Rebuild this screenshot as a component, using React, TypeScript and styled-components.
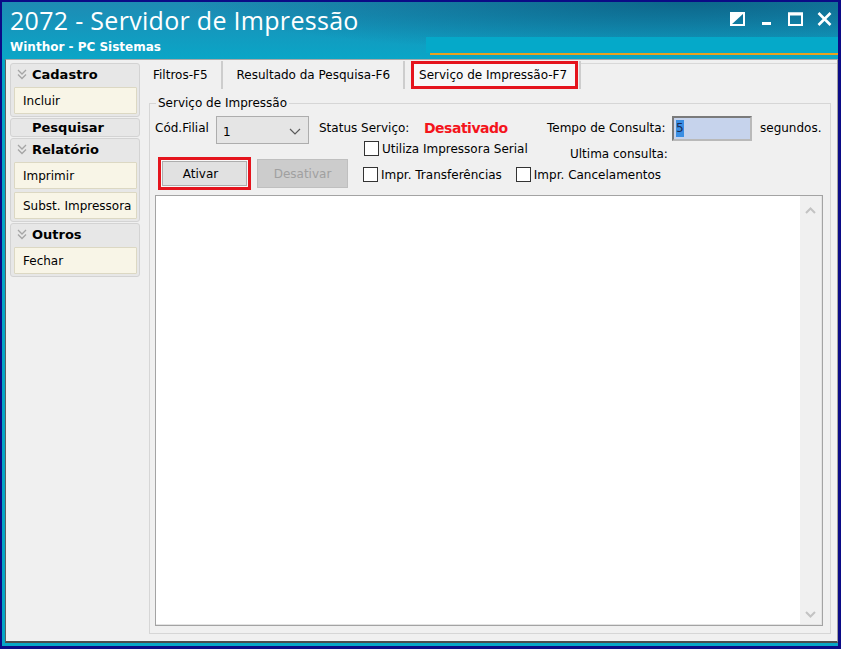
import React from 'react'
import styled, { createGlobalStyle } from 'styled-components'

const GlobalStyle = createGlobalStyle`
  html, body {
    margin: 0;
    padding: 0;
    background: #ffffff;
  }
  body {
    font-family: 'DejaVu Sans', 'Noto Sans', sans-serif;
    font-size: 12px;
    color: #000;
  }
  * {
    box-sizing: border-box;
  }
`

const Window = styled.div`
  width: 841px;
  height: 649px;
  background: #0b0b86;
  padding: 2px 3px 3px 2px;
  display: flex;
`

const Frame = styled.div`
  flex: 1;
  min-width: 0;
  display: flex;
  flex-direction: column;
  background: #07a6c6;
`

const TitleBar = styled.div`
  height: 57px;
  flex-shrink: 0;
  display: flex;
  justify-content: space-between;
  padding: 0 6px 0 8px;
  background:
    linear-gradient(#e9a11f, #e9a11f) right 0 top 51px / 408px 2px no-repeat,
    linear-gradient(#05a9c9, #05a9c9) right 0 top 35px / 412px 16px no-repeat,
    radial-gradient(ellipse 60% 90% at 82% 0%, rgba(6, 90, 125, 0.75), rgba(6, 90, 125, 0) 100%),
    linear-gradient(180deg, #1e8bb3 0%, #1597bd 45%, #0aa6c7 100%);
`

const TitleText = styled.div`
  display: flex;
  flex-direction: column;
  padding-top: 4px;
  color: #ffffff;
`

const AppTitle = styled.div`
  font-family: 'Open Sans', 'Noto Sans', sans-serif;
  font-size: 25px;
  letter-spacing: 0.3px;
  line-height: 28px;
  white-space: nowrap;
`

const AppSubtitle = styled.div`
  margin-top: 6px;
  font-weight: bold;
  font-size: 12px;
  line-height: 14px;
  white-space: nowrap;
`

const WindowButtons = styled.div`
  display: flex;
  gap: 14px;
  padding-top: 10px;
`

const BodyWrap = styled.div`
  flex: 1;
  min-height: 0;
  display: flex;
  padding: 0 0 3px 3px;
`

const Body = styled.div`
  flex: 1;
  min-width: 0;
  display: flex;
  background: #f0f0f0;
  border-top: 1px solid #a9a9a9;
  border-left: 1px solid #5f5f5f;
  border-right: 1px solid #a0a0a0;
  border-bottom: 2px solid #4d4d4d;
`

const Sidebar = styled.div`
  width: 137px;
  flex-shrink: 0;
  display: flex;
  flex-direction: column;
  gap: 1px;
  padding: 3px 3px 0 4px;
`

const Group = styled.div<{ $empty?: boolean }>`
  display: flex;
  flex-direction: column;
  gap: 3px;
  padding: 0 2px ${p => (p.$empty ? 0 : 2)}px 3px;
  background: #e7e7e7;
  border: 1px solid #d3d3d3;
  border-radius: 3px;
`

const GroupHeader = styled.div<{ $indent: number; $h: number }>`
  height: ${p => p.$h}px;
  display: flex;
  align-items: center;
  gap: 5px;
  padding-left: ${p => p.$indent}px;
  font-weight: bold;
  font-size: 13px;
  color: #000;
  white-space: nowrap;
`

const GroupItem = styled.div`
  height: 27px;
  display: flex;
  align-items: center;
  padding-left: 8px;
  background: #f8f5e7;
  border: 1px solid #dcd8c3;
  border-radius: 1px;
  white-space: nowrap;
`

const Main = styled.div`
  flex: 1;
  min-width: 0;
  display: flex;
  flex-direction: column;
  padding-top: 1px;
`

const TabStrip = styled.div`
  height: 28px;
  display: flex;
  align-items: stretch;
`

const Tab = styled.div<{ $pl: number; $pr: number }>`
  display: flex;
  align-items: center;
  padding: 0 ${p => p.$pr}px 0 ${p => p.$pl}px;
  border-right: 2px solid #cdcdcd;
  white-space: nowrap;
`

const Marked = styled.div<{ $pad: string }>`
  display: flex;
  align-items: center;
  align-self: stretch;
  padding: ${p => p.$pad};
  border: 3px solid #e5141d;
  background: #f8f8f8;
`

const TabRest = styled.div`
  flex: 1;
  margin-top: 2px;
  border-top: 1px solid #d8d8d8;
`

const TabPage = styled.div`
  flex: 1;
  min-height: 0;
  display: flex;
  padding: 7px 6px 7px 6px;
`

const GroupBox = styled.fieldset`
  flex: 1;
  min-width: 0;
  margin: 0;
  display: flex;
  flex-direction: column;
  padding: 0 7px 7px 5px;
  border: 1px solid #d6d6d6;
`

const Legend = styled.legend`
  margin-left: 1px;
  padding: 0 2px;
  font-size: 12px;
  line-height: 15px;
  white-space: nowrap;
`

const Row = styled.div<{ $h: number; $mt?: number }>`
  height: ${p => p.$h}px;
  margin-top: ${p => p.$mt ?? 0}px;
  display: flex;
  align-items: center;
  white-space: nowrap;
`

const Cell = styled.div<{ $w?: number; $ml?: number; $dy?: number }>`
  ${p => (p.$w ? `width: ${p.$w}px; flex-shrink: 0;` : '')}
  margin-left: ${p => p.$ml ?? 0}px;
  position: relative;
  top: ${p => p.$dy ?? 0}px;
  display: flex;
  align-items: center;
`

const Combo = styled.div`
  width: 93px;
  height: 28px;
  align-self: flex-start;
  display: flex;
  align-items: center;
  justify-content: space-between;
  padding: 3px 7px 0 6px;
  background: #e5e5e5;
  border: 1px solid #adadad;
`

const StatusText = styled.span`
  font-weight: bold;
  font-size: 14px;
  letter-spacing: -0.5px;
  color: #f4141c;
`

const NumberInput = styled.div`
  width: 80px;
  height: 25px;
  display: flex;
  align-items: center;
  padding-left: 2px;
  background: #c6d3ec;
  border: 2px solid #8c8c8c;
  border-color: #7a7a7a #b9b9b9 #b9b9b9 #7a7a7a;
`

const Selected = styled.span`
  background: #3a8ee3;
  color: #1a2a55;
  padding: 1px 0;
  line-height: 15px;
`

const CheckBox = styled.span`
  width: 15px;
  height: 15px;
  flex-shrink: 0;
  background: #ffffff;
  border: 1px solid #333333;
  margin-right: 3px;
`

const Button = styled.div<{ $disabled?: boolean; $w: number; $h: number; $shift?: number }>`
  width: ${p => p.$w}px;
  height: ${p => p.$h}px;
  display: flex;
  align-items: center;
  justify-content: center;
  padding-right: ${p => p.$shift ?? 0}px;
  background: ${p => (p.$disabled ? '#cccccc' : '#e1e1e1')};
  border: 1px solid ${p => (p.$disabled ? '#bfbfbf' : '#adadad')};
  color: ${p => (p.$disabled ? '#a0a0a0' : '#000000')};
`

const Memo = styled.div`
  flex: 1;
  margin-top: 5px;
  display: flex;
  background: #ffffff;
  border: 1px solid #a3a3a3;
  box-shadow: inset -1px -1px 0 #e3e3e3;
`

const MemoText = styled.div`
  flex: 1;
`

const ScrollBar = styled.div`
  width: 21px;
  display: flex;
  flex-direction: column;
  justify-content: space-between;
  background: #f0f0f0;
  margin: 0 1px 1px 0;
`

const ScrollButton = styled.div<{ $h: number }>`
  height: ${p => p.$h}px;
  display: flex;
  align-items: center;
  justify-content: center;
`

const Chevron = ({ up }: { up?: boolean }) => (
  <svg width="11" height="7" viewBox="0 0 11 7">
    <polyline
      points={up ? '1,6 5.5,1.5 10,6' : '1,1 5.5,5.5 10,1'}
      fill="none"
      stroke="#c3c3c3"
      strokeWidth="2"
    />
  </svg>
)

const ComboArrow = () => (
  <svg width="12" height="7" viewBox="0 0 12 7">
    <polyline points="1,1 6,6 11,1" fill="none" stroke="#5a5a5a" strokeWidth="1.2" />
  </svg>
)

const DoubleChevron = () => (
  <svg width="10" height="11" viewBox="0 0 10 11">
    <polyline points="1,1 5,5 9,1" fill="none" stroke="#a5a5a5" strokeWidth="1.3" />
    <polyline points="1,5.5 5,9.5 9,5.5" fill="none" stroke="#a5a5a5" strokeWidth="1.3" />
  </svg>
)

const IconRestore = () => (
  <svg width="15" height="14" viewBox="0 0 15 14">
    <rect x="1" y="1" width="13" height="12" fill="none" stroke="#fff" strokeWidth="2" />
    <polygon points="1,1 14,1 1,13" fill="#fff" />
  </svg>
)

const IconMin = () => (
  <svg width="15" height="14" viewBox="0 0 15 14">
    <rect x="3" y="10" width="9" height="3" fill="#fff" />
  </svg>
)

const IconMax = () => (
  <svg width="15" height="14" viewBox="0 0 15 14">
    <rect x="1" y="1.5" width="13" height="11.5" fill="none" stroke="#fff" strokeWidth="2" />
    <rect x="0" y="0.5" width="15" height="3" fill="#fff" />
  </svg>
)

const IconClose = () => (
  <svg width="15" height="14" viewBox="0 0 15 14">
    <path d="M1.5 1 L13.5 13 M13.5 1 L1.5 13" stroke="#fff" strokeWidth="2.6" />
  </svg>
)

const sideGroups = [
  { title: 'Cadastro', icon: true, items: ['Incluir'] },
  { title: 'Pesquisar', icon: false, items: [] as string[] },
  { title: 'Relatório', icon: true, items: ['Imprimir', 'Subst. Impressora'] },
  { title: 'Outros', icon: true, items: ['Fechar'] },
]

export default function App() {
  return (
    <>
      <GlobalStyle />
      <Window>
        <Frame>
          <TitleBar>
            <TitleText>
              <AppTitle>2072 - Servidor de Impressão</AppTitle>
              <AppSubtitle>Winthor - PC Sistemas</AppSubtitle>
            </TitleText>
            <WindowButtons>
              <IconRestore />
              <IconMin />
              <IconMax />
              <IconClose />
            </WindowButtons>
          </TitleBar>

          <BodyWrap>
            <Body>
              <Sidebar>
                {sideGroups.map(g => (
                  <Group key={g.title} $empty={g.items.length === 0}>
                    <GroupHeader $indent={g.icon ? 3 : 18} $h={g.items.length ? 20 : 17}>
                      {g.icon && <DoubleChevron />}
                      {g.title}
                    </GroupHeader>
                    {g.items.map(item => (
                      <GroupItem key={item}>{item}</GroupItem>
                    ))}
                  </Group>
                ))}
              </Sidebar>

              <Main>
                <TabStrip>
                  <Tab $pl={10} $pr={13}>Filtros-F5</Tab>
                  <Tab $pl={14} $pr={13}>Resultado da Pesquisa-F6</Tab>
                  <Tab $pl={6} $pr={1}>
                    <Marked $pad="0 8px 0 5px">Serviço de Impressão-F7</Marked>
                  </Tab>
                  <TabRest />
                </TabStrip>

                <TabPage>
                  <GroupBox>
                    <Legend>Serviço de Impressão</Legend>

                    <Row $h={24} $mt={5}>
                      <Cell $w={61}>Cód.Filial</Cell>
                      <Combo>
                        <span>1</span>
                        <ComboArrow />
                      </Combo>
                      <Cell $w={105} $ml={10}>Status Serviço:</Cell>
                      <Cell $w={123}>
                        <StatusText>Desativado</StatusText>
                      </Cell>
                      <Cell $w={125}>Tempo de Consulta:</Cell>
                      <NumberInput>
                        <Selected>5</Selected>
                      </NumberInput>
                      <Cell $ml={8}>segundos.</Cell>
                    </Row>

                    <Row $h={17}>
                      <Cell $w={206} $ml={209}>
                        <CheckBox />
                        Utiliza Impressora Serial
                      </Cell>
                      <Cell $dy={5}>Ultima consulta:</Cell>
                    </Row>

                    <Row $h={33}>
                      <Cell $ml={3}>
                        <Marked $pad="1px">
                          <Button $w={85} $h={25} $shift={8}>Ativar</Button>
                        </Marked>
                      </Cell>
                      <Cell $ml={6}>
                        <Button $disabled $w={91} $h={29}>Desativar</Button>
                      </Cell>
                      <Cell $ml={15} $dy={1}>
                        <CheckBox />
                        Impr. Transferências
                      </Cell>
                      <Cell $ml={14} $dy={1}>
                        <CheckBox />
                        Impr. Cancelamentos
                      </Cell>
                    </Row>

                    <Memo>
                      <MemoText />
                      <ScrollBar>
                        <ScrollButton $h={28}>
                          <Chevron up />
                        </ScrollButton>
                        <ScrollButton $h={20}>
                          <Chevron />
                        </ScrollButton>
                      </ScrollBar>
                    </Memo>
                  </GroupBox>
                </TabPage>
              </Main>
            </Body>
          </BodyWrap>
        </Frame>
      </Window>
    </>
  )
}
